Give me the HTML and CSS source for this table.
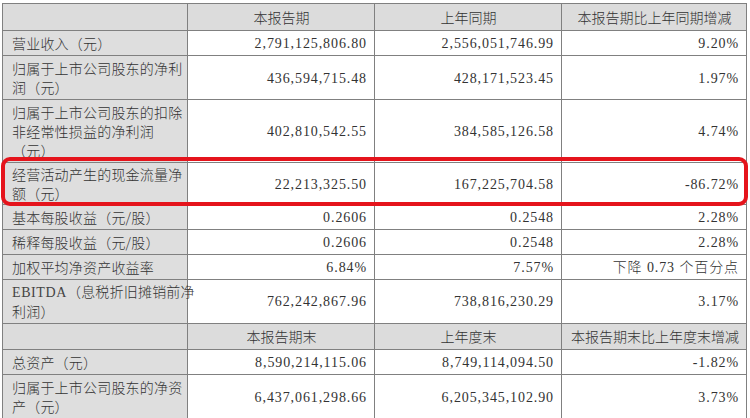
FILE: index.html
```html
<!DOCTYPE html>
<html lang="zh-CN">
<head>
<meta charset="utf-8">
<title>主要会计数据</title>
<link rel="stylesheet" href="styles.css">
</head>
<body>
<div class="wrap">
  <table class="fin">
    <colgroup>
      <col class="c1"><col class="c2"><col class="c3"><col class="c4">
    </colgroup>
    <tr class="head">
      <td class="lab"></td><td>本报告期</td><td>上年同期</td><td>本报告期比上年同期增减</td>
    </tr>
    <tr>
      <td class="lab">营业收入（元）</td><td class="num">2,791,125,806.80</td><td class="num">2,556,051,746.99</td><td class="num">9.20%</td>
    </tr>
    <tr>
      <td class="lab">归属于上市公司股东的净利<br>润（元）</td><td class="num">436,594,715.48</td><td class="num">428,171,523.45</td><td class="num">1.97%</td>
    </tr>
    <tr>
      <td class="lab">归属于上市公司股东的扣除<br>非经常性损益的净利润<br>（元）</td><td class="num">402,810,542.55</td><td class="num">384,585,126.58</td><td class="num">4.74%</td>
    </tr>
    <tr class="hl">
      <td class="lab">经营活动产生的现金流量净<br>额（元）</td><td class="num">22,213,325.50</td><td class="num">167,225,704.58</td><td class="num">-86.72%</td>
    </tr>
    <tr>
      <td class="lab">基本每股收益（元/股）</td><td class="num">0.2606</td><td class="num">0.2548</td><td class="num">2.28%</td>
    </tr>
    <tr>
      <td class="lab">稀释每股收益（元/股）</td><td class="num">0.2606</td><td class="num">0.2548</td><td class="num">2.28%</td>
    </tr>
    <tr>
      <td class="lab">加权平均净资产收益率</td><td class="num">6.84%</td><td class="num">7.57%</td><td class="num">下降 0.73 个百分点</td>
    </tr>
    <tr class="tight">
      <td class="lab"><span class="lat">EBITDA</span>（息税折旧摊销前净<br>利润）</td><td class="num">762,242,867.96</td><td class="num">738,816,230.29</td><td class="num">3.17%</td>
    </tr>
    <tr class="head head2">
      <td class="lab"></td><td>本报告期末</td><td>上年度末</td><td>本报告期末比上年度末增减</td>
    </tr>
    <tr>
      <td class="lab">总资产（元）</td><td class="num">8,590,214,115.06</td><td class="num">8,749,114,094.50</td><td class="num">-1.82%</td>
    </tr>
    <tr>
      <td class="lab">归属于上市公司股东的净资<br>产（元）</td><td class="num">6,437,061,298.66</td><td class="num">6,205,345,102.90</td><td class="num">3.73%</td>
    </tr>
  </table>
  <div class="mark"></div>
</div>
</body>
</html>
```

FILE: styles.css
```css
html, body {
  margin: 0;
  padding: 0;
  background: #ffffff;
}

.wrap {
  position: relative;
  padding: 3px 0 0 2px;
}

.fin {
  border-collapse: collapse;
  table-layout: fixed;
  width: 744px;
  font-family: "Noto Sans CJK SC", "Liberation Serif", serif;
  font-size: 14px;
  color: #333333;
}

.c1 { width: 185px; }
.c2 { width: 187px; }
.c3 { width: 187px; }
.c4 { width: 185px; }

.fin td {
  border: 1px solid #808080;
  padding: 3px 8px 2px 9px;
  line-height: 19px;
  vertical-align: middle;
  white-space: nowrap;
  font-weight: 300;
}

.fin .lab {
  background: #dedede;
  padding-left: 9px;
  letter-spacing: 0.2px;
}

.lat {
  font-family: "Liberation Serif", serif;
  font-weight: 400;
  color: #444444;
  letter-spacing: 0.6px;
}

.fin .head td {
  background: #dcdcdc;
  text-align: center;
  padding-top: 4px;
  padding-bottom: 3px;
}

.fin .head2 td {
  padding-top: 3px;
  padding-bottom: 3px;
}

.fin .hl td {
  padding-top: 2px;
  padding-bottom: 1px;
}

.fin .tight td {
  padding-top: 2px;
  padding-bottom: 2px;
}

.fin .num {
  text-align: right;
  font-family: "Liberation Serif", "Noto Sans CJK SC", serif;
  letter-spacing: 0.9px;
  padding-right: 7px;
}

.mark {
  position: absolute;
  left: 1px;
  top: 157px;
  width: 747px;
  height: 49px;
  box-sizing: border-box;
  border: 4px solid #e5141c;
  border-radius: 9px;
  pointer-events: none;
}
```
